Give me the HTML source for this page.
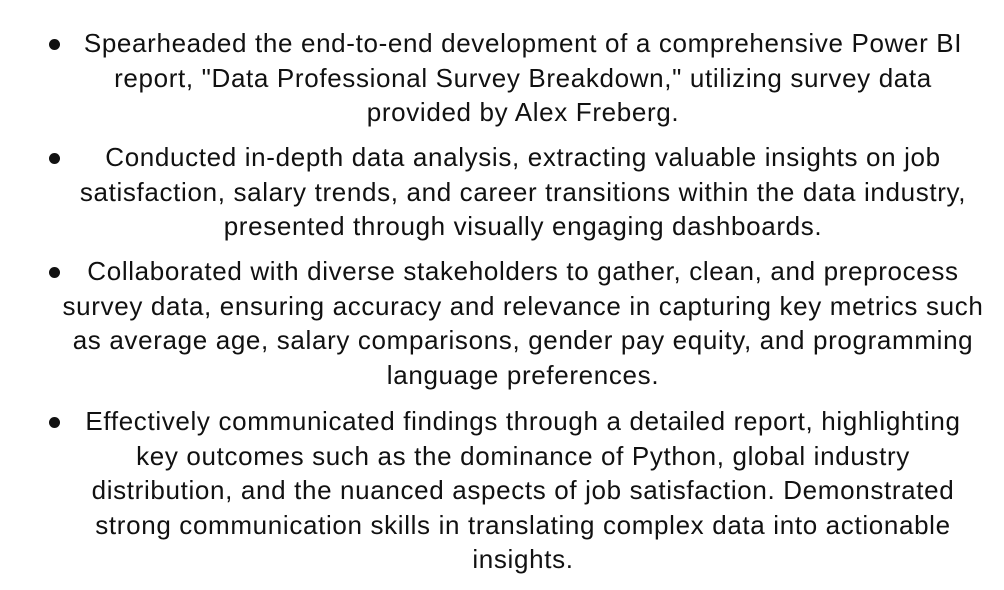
<!DOCTYPE html>
<html><head><meta charset="utf-8"><style>
html,body{margin:0;padding:0;background:#fff;width:1004px;height:590px;overflow:hidden}
body{font-family:"Liberation Sans",sans-serif;color:#111;font-size:26px;letter-spacing:0.65px}
.p{position:absolute;left:58px;width:930px;text-align:center;line-height:34.5px;white-space:nowrap}
.b{position:absolute;left:49px;width:11px;height:11px;border-radius:50%;background:#111}
</style></head><body>
<div class="b" style="top:39px"></div>
<div class="p" style="top:26px">Spearheaded the end-to-end development of a comprehensive Power BI<br>report, "Data Professional Survey Breakdown," utilizing survey data<br>provided by Alex Freberg.</div>
<div class="b" style="top:153px"></div>
<div class="p" style="top:140px">Conducted in-depth data analysis, extracting valuable insights on job<br>satisfaction, salary trends, and career transitions within the data industry,<br>presented through visually engaging dashboards.</div>
<div class="b" style="top:267px"></div>
<div class="p" style="top:254px">Collaborated with diverse stakeholders to gather, clean, and preprocess<br>survey data, ensuring accuracy and relevance in capturing key metrics such<br>as average age, salary comparisons, gender pay equity, and programming<br>language preferences.</div>
<div class="b" style="top:417px"></div>
<div class="p" style="top:404px">Effectively communicated findings through a detailed report, highlighting<br>key outcomes such as the dominance of Python, global industry<br>distribution, and the nuanced aspects of job satisfaction. Demonstrated<br>strong communication skills in translating complex data into actionable<br>insights.</div>
</body></html>
